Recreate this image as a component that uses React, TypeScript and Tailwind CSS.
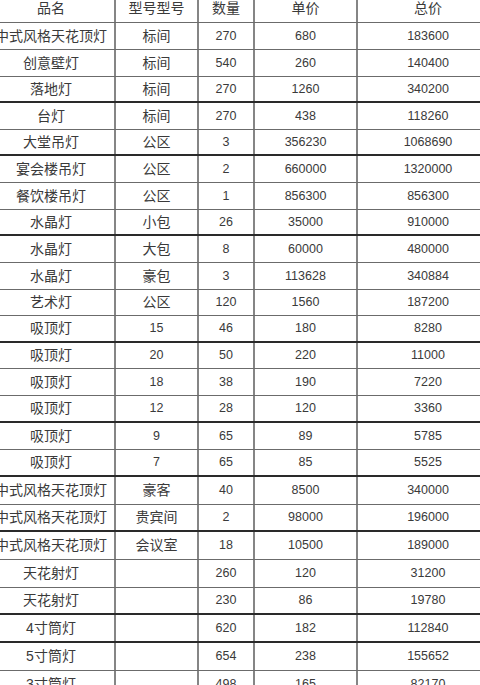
import React from 'react'

type Row = {
  name: string
  model: string
  qty: string
  price: string
  total: string
  h: string
  line: string
}

const thin = 'border-b border-[#6b6b6b]'
const thick = 'border-b-2 border-[#2a2a2a]'

const rows: Row[] = [
  { name: '中式风格天花顶灯', model: '标间', qty: '270', price: '680', total: '183600', h: 'h-[27px]', line: thin },
  { name: '创意壁灯', model: '标间', qty: '540', price: '260', total: '140400', h: 'h-[27px]', line: thin },
  { name: '落地灯', model: '标间', qty: '270', price: '1260', total: '340200', h: 'h-[26px]', line: thick },
  { name: '台灯', model: '标间', qty: '270', price: '438', total: '118260', h: 'h-[27px]', line: thin },
  { name: '大堂吊灯', model: '公区', qty: '3', price: '356230', total: '1068690', h: 'h-[26px]', line: thick },
  { name: '宴会楼吊灯', model: '公区', qty: '2', price: '660000', total: '1320000', h: 'h-[27px]', line: thin },
  { name: '餐饮楼吊灯', model: '公区', qty: '1', price: '856300', total: '856300', h: 'h-[27px]', line: thin },
  { name: '水晶灯', model: '小包', qty: '26', price: '35000', total: '910000', h: 'h-[26px]', line: thick },
  { name: '水晶灯', model: '大包', qty: '8', price: '60000', total: '480000', h: 'h-[27px]', line: thin },
  { name: '水晶灯', model: '豪包', qty: '3', price: '113628', total: '340884', h: 'h-[27px]', line: thin },
  { name: '艺术灯', model: '公区', qty: '120', price: '1560', total: '187200', h: 'h-[26px]', line: thin },
  { name: '吸顶灯', model: '15', qty: '46', price: '180', total: '8280', h: 'h-[27px]', line: thick },
  { name: '吸顶灯', model: '20', qty: '50', price: '220', total: '11000', h: 'h-[26px]', line: thin },
  { name: '吸顶灯', model: '18', qty: '38', price: '190', total: '7220', h: 'h-[27px]', line: thin },
  { name: '吸顶灯', model: '12', qty: '28', price: '120', total: '3360', h: 'h-[27px]', line: thick },
  { name: '吸顶灯', model: '9', qty: '65', price: '89', total: '5785', h: 'h-[27px]', line: thin },
  { name: '吸顶灯', model: '7', qty: '65', price: '85', total: '5525', h: 'h-[27px]', line: thick },
  { name: '中式风格天花顶灯', model: '豪客', qty: '40', price: '8500', total: '340000', h: 'h-[28px]', line: thin },
  { name: '中式风格天花顶灯', model: '贵宾间', qty: '2', price: '98000', total: '196000', h: 'h-[27px]', line: thick },
  { name: '中式风格天花顶灯', model: '会议室', qty: '18', price: '10500', total: '189000', h: 'h-[28px]', line: thin },
  { name: '天花射灯', model: '', qty: '260', price: '120', total: '31200', h: 'h-[28px]', line: thin },
  { name: '天花射灯', model: '', qty: '230', price: '86', total: '19780', h: 'h-[27px]', line: thick },
  { name: '4寸筒灯', model: '', qty: '620', price: '182', total: '112840', h: 'h-[28px]', line: thick },
  { name: '5寸筒灯', model: '', qty: '654', price: '238', total: '155652', h: 'h-[28px]', line: thin },
  { name: '3寸筒灯', model: '', qty: '498', price: '165', total: '82170', h: 'h-[28px]', line: thin },
]

const grid = 'grid grid-cols-[128px_83px_56px_103px_140px]'
const cell = 'flex items-center justify-center border-r-2 border-[#858585]'
const num = 'text-[12.5px]'

export default function App() {
  return (
    <div className="w-[480px] h-[685px] overflow-hidden bg-white text-[#3a3a3a] font-['Liberation_Sans','Noto_Sans_CJK_SC',sans-serif] text-[14px]">
      <div className="ml-[-12px] w-[510px]">
        {/* Header */}
        <div className={`${grid} h-[23px] ${thin}`}>
          <div className="flex justify-center items-start leading-[16px] border-r-2 border-[#858585]">品名</div>
          <div className="flex justify-center items-start leading-[16px] border-r-2 border-[#858585]">型号型号</div>
          <div className="flex justify-center items-start leading-[16px] border-r-2 border-[#858585]">数量</div>
          <div className="flex justify-center items-start leading-[16px] border-r-2 border-[#858585]">单价</div>
          <div className="flex justify-center items-start leading-[16px]">总价</div>
        </div>

        {/* Body */}
        {rows.map((r, i) => (
          <div key={i} className={`${grid} ${r.h} ${r.line}`}>
            <div className={`${cell} whitespace-nowrap`}>{r.name}</div>
            <div className={`${cell} ${/^\d+$/.test(r.model) ? num : ''}`}>{r.model}</div>
            <div className={`${cell} ${num}`}>{r.qty}</div>
            <div className={`${cell} ${num}`}>{r.price}</div>
            <div className={`flex items-center justify-center ${num}`}>{r.total}</div>
          </div>
        ))}
      </div>
    </div>
  )
}
